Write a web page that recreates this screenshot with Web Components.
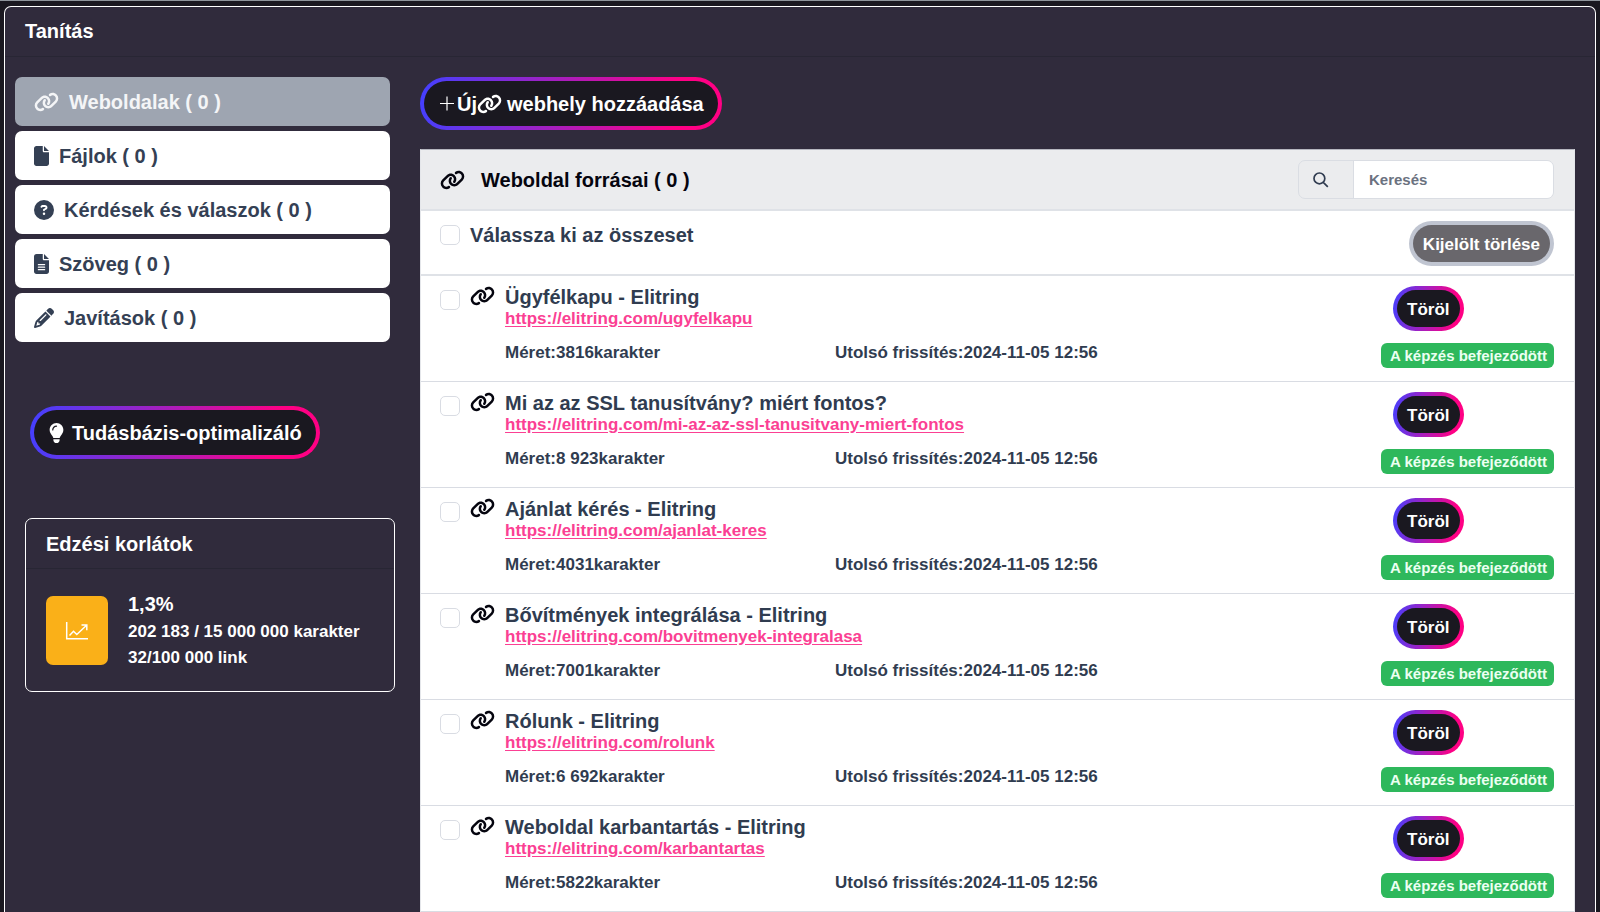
<!DOCTYPE html>
<html lang="hu">
<head>
<meta charset="utf-8">
<title>Tanítás</title>
<style>
html { background: #1a1820; }
body { margin: 0; font: bold 20px/24px "Liberation Sans", Arial, sans-serif; color: #303c50; height: 100vh; overflow: hidden; }
</style>
</head>
<body>
<training-page></training-page>

<script>
const ICONS = {
  link: ['0 0 640 512', 25, '<path d="M579.8 267.7c56.5-56.5 56.5-148 0-204.5c-50-50-128.8-56.5-186.3-15.4l-1.6 1.1c-14.4 10.3-17.7 30.3-7.4 44.6s30.3 17.7 44.6 7.4l1.6-1.1c32.1-22.9 76-19.3 103.8 8.6c31.5 31.5 31.5 82.5 0 114L422.3 334.8c-31.5 31.5-82.5 31.5-114 0c-27.9-27.9-31.5-71.8-8.6-103.8l1.1-1.6c10.3-14.4 6.9-34.4-7.4-44.6s-34.4-6.9-44.6 7.4l-1.1 1.6C206.5 251.2 213 330 263 380c56.5 56.5 148 56.5 204.5 0L579.8 267.7zM60.2 244.3c-56.5 56.5-56.5 148 0 204.5c50 50 128.8 56.5 186.3 15.4l1.6-1.1c14.4-10.3 17.7-30.3 7.4-44.6s-30.3-17.7-44.6-7.4l-1.6 1.1c-32.1 22.9-76 19.3-103.8-8.6C74 372 74 321 105.5 289.5L217.7 177.2c31.5-31.5 82.5-31.5 114 0c27.9 27.9 31.5 71.8 8.6 103.9l-1.1 1.6c-10.3 14.4-6.9 34.4 7.4 44.6s34.4 6.9 44.6-7.4l1.1-1.6C433.5 260.8 427 182 377 132c-56.5-56.5-148-56.5-204.5 0L60.2 244.3z"/>'],
  file: ['0 0 384 512', 15, '<path d="M0 64C0 28.7 28.7 0 64 0H224V128c0 17.7 14.3 32 32 32H384V448c0 35.3-28.7 64-64 64H64c-35.3 0-64-28.7-64-64V64zm384 64H256V0L384 128z"/>'],
  text: ['0 0 384 512', 15, '<path d="M64 0C28.7 0 0 28.7 0 64V448c0 35.3 28.7 64 64 64H320c35.3 0 64-28.7 64-64V160H256c-17.7 0-32-14.3-32-32V0H64zM256 0V128H384L256 0zM112 256H272c8.8 0 16 7.2 16 16s-7.2 16-16 16H112c-8.8 0-16-7.2-16-16s7.2-16 16-16zm0 64H272c8.8 0 16 7.2 16 16s-7.2 16-16 16H112c-8.8 0-16-7.2-16-16s7.2-16 16-16zm0 64H272c8.8 0 16 7.2 16 16s-7.2 16-16 16H112c-8.8 0-16-7.2-16-16s7.2-16 16-16z"/>'],
  question: ['0 0 512 512', 20, '<path d="M256 512A256 256 0 1 0 256 0a256 256 0 1 0 0 512zM169.8 165.3c7.9-22.3 29.1-37.3 52.8-37.3h58.3c34.9 0 63.1 28.3 63.1 63.1c0 22.6-12.1 43.5-31.7 54.8L280 264.4c-.2 13-10.9 23.6-24 23.6c-13.3 0-24-10.7-24-24V250.5c0-8.6 4.6-16.5 12.1-20.8l44.3-25.4c4.7-2.7 7.6-7.7 7.6-13.1c0-8.4-6.8-15.1-15.1-15.1H222.6c-3.4 0-6.4 2.1-7.5 5.3l-.4 1.2c-4.4 12.5-18.2 19-30.6 14.6s-19-18.2-14.6-30.6l.4-1.2zM224 352a32 32 0 1 1 64 0 32 32 0 1 1 -64 0z"/>'],
  pencil: ['0 0 512 512', 20, '<path d="M410.3 231l11.3-11.3-33.9-33.9-62.1-62.1L291.7 89.8l-11.3 11.3-22.6 22.6L58.6 322.9c-10.4 10.4-18 23.3-22.2 37.4L1 480.7c-2.5 8.4-.2 17.5 6.1 23.7s15.3 8.5 23.7 6.1l120.3-35.4c14.1-4.2 27-11.8 37.4-22.2L387.7 253.7 410.3 231zM160 399.4l-9.1 22.7c-4 3.1-8.5 5.4-13.3 6.9L59.4 452l23-78.1c1.4-4.9 3.8-9.4 6.9-13.3l22.7-9.1v32c0 8.8 7.2 16 16 16h32zM362.7 18.7L348.3 33.2 325.7 55.8 314.3 67.1l33.9 33.9 62.1 62.1 33.9 33.9 11.3-11.3 22.6-22.6 14.5-14.5c25-25 25-65.5 0-90.5L453.3 18.7c-25-25-65.5-25-90.5 0zm-47.4 168l-144 144c-6.2 6.2-16.4 6.2-22.6 0s-6.2-16.4 0-22.6l144-144c6.2-6.2 16.4-6.2 22.6 0s6.2 16.4 0 22.6z"/>'],
  bulb: ['0 0 384 512', 15, '<path d="M272 384c9.6-31.9 29.5-59.1 49.2-86.2l0 0c5.2-7.1 10.4-14.2 15.4-21.4c19.8-28.5 31.4-63 31.4-100.3C368 78.8 289.2 0 192 0S16 78.8 16 176c0 37.3 11.6 71.9 31.4 100.3c5 7.2 10.2 14.3 15.4 21.4l0 0c19.8 27.1 39.7 54.4 49.2 86.2H272zM192 512c44.2 0 80-35.8 80-80V416H112v16c0 44.2 35.8 80 80 80zM112 176c0 8.8-7.2 16-16 16s-16-7.2-16-16c0-61.9 50.1-112 112-112c8.8 0 16 7.2 16 16s-7.2 16-16 16c-44.2 0-80 35.8-80 80z"/>'],
  plus: ['0 0 14 20', 14, '<path d="M7 2.5v14M0 9.5h14" fill="none" stroke="currentColor" stroke-width="1.2"/>'],
  search: ['0 0 20 20', 20, '<path d="M8.4 3a5.4 5.4 0 1 0 0 10.8a5.4 5.4 0 1 0 0-10.8zM12.3 12.3l4.5 4.5" fill="none" stroke="currentColor" stroke-width="1.7"/>'],
  chart: ['0 0 24 20', 24, '<path d="M1.7 1v16.8H23M4.5 14.5l4-4.2 3.3 3.2 9.5-9M16.5 4h5.3v5.3" fill="none" stroke="currentColor" stroke-width="1.5"/>']
};

function define(name, render) {
  customElements.define(name, class extends HTMLElement {
    connectedCallback() {
      if (this.shadowRoot) return;
      const t = document.createElement('template');
      t.innerHTML = render(this);
      this.attachShadow({ mode: 'open' }).append(t.content.cloneNode(true));
    }
  });
}

define('ui-icon', el => {
  const [box, width, body] = ICONS[el.getAttribute('name')];
  return `<style>
    :host { display: inline-block; flex: none; height: 20px; }
    svg { display: block; height: 20px; fill: currentColor; }
  </style><svg viewBox="${box}" width="${width}" aria-hidden="true">${body}</svg>`;
});

define('nav-item', el => `<style>
    :host { display: block; }
    button { display: flex; align-items: center; gap: 10px; width: 100%; height: 49px; padding: 0 19px;
      border: 0; border-radius: 7px; background: #fff; color: #344054; font: inherit; text-align: left; }
    :host([active]) button { background: #9ea5b1; color: #f4f5f7; }
  </style>
  <button type="button"><ui-icon name="${el.getAttribute('icon')}"></ui-icon><span><slot></slot></span></button>`);

define('pill-button', el => `<style>
    :host { display: inline-block; vertical-align: top; }
    button { display: flex; align-items: center; height: 53px; padding: 0 14px 0 15px; border: 4px solid transparent; border-radius: 27px;
      background: linear-gradient(#1a1820, #1a1820) padding-box, linear-gradient(98deg, #4340ff, #ff0084 85%) border-box;
      color: #fff; font: inherit; white-space: nowrap; }
    :host([size=small]) button { height: 45px; padding: 2px 10px 0; border-radius: 23px; font-size: 17px; }
    :host([disabled]) button { background: linear-gradient(#69676c, #69676c) padding-box, linear-gradient(#c0c5d1, #c0c5d1) border-box; }
  </style>
  <button type="button" ${el.hasAttribute('disabled') ? 'disabled' : ''}><slot></slot></button>`);

define('limits-card', () => `<style>
    :host { display: block; border: 1px solid #fff; border-radius: 7px; color: #fff; }
    h2 { margin: 0; padding: 13px 20px 12px; border-bottom: 1px solid #282634; font: inherit; }
    .body { display: flex; align-items: center; gap: 20px; padding: 21px 20px 20px; }
    .tile { display: flex; align-items: center; justify-content: center; width: 62px; height: 69px; border-radius: 7px; background: #fab018; }
    p { margin: 0; line-height: 29px; }
    .small { font-size: 17px; line-height: 26px; }
  </style>
  <h2>Edzési korlátok</h2>
  <div class="body">
    <div class="tile"><ui-icon name="chart"></ui-icon></div>
    <div><p>1,3%</p><p class="small">202 183 / 15 000 000 karakter</p><p class="small">32/100 000 link</p></div>
  </div>`);

define('search-box', () => `<style>
    :host { display: flex; width: 256px; height: 39px; box-sizing: border-box; border: 1px solid #dadde3; border-radius: 7px; overflow: hidden; }
    label { display: flex; align-items: center; width: 55px; padding-left: 12px; box-sizing: border-box; border-right: 1px solid #dadde3; color: #303c50; }
    input { flex: 1; min-width: 0; border: 0; padding: 0 15px; background: #fff; color: #303c50; font: inherit; font-size: 15px; }
    input::placeholder { color: #6b7280; opacity: 1; }
  </style>
  <label for="q" aria-label="Keresés"><ui-icon name="search"></ui-icon></label>
  <input id="q" type="text" placeholder="Keresés">`);

define('check-box', el => `<style>
    :host { display: block; flex: none; height: 20px; }
    input { appearance: none; display: block; box-sizing: border-box; width: 20px; height: 20px; margin: 0; border: 1px solid #d9dce3; border-radius: 5px; background: #fff; }
    input:checked { background: #4340ff; }
  </style>
  <input type="checkbox" aria-label="${el.getAttribute('label')}">`);

define('source-row', el => {
  const a = n => el.getAttribute(n);
  return `<style>
    :host { display: flex; box-sizing: border-box; height: 106px; padding: 10px 20px 0 19px; border-bottom: 1px solid #d9dce3; background: #fff; }
    check-box { margin: 4px 10px 0 0; }
    ui-icon { color: #05050f; margin-right: 10px; }
    .info { flex: 1; min-width: 0; }
    h3 { margin: 0; font: inherit; line-height: 22px; }
    a { display: block; width: fit-content; color: #fb4093; font-size: 17px; line-height: 22px; text-underline-offset: 2px; }
    dl { display: grid; grid-template-columns: 330px 1fr; margin: 12px 0 0; font-size: 17px; line-height: 22px; }
    dl div { display: flex; }
    dd { margin: 0; }
    .side { width: 173px; }
    pill-button { margin-left: 12px; }
    .badge { display: block; margin-top: 12px; padding: 0 9px; height: 25px; border-radius: 6px; background: #2eb85c; color: #ebfff1; font-size: 15px; line-height: 25px; white-space: nowrap; }
  </style>
  <check-box label="${a('name')}"></check-box>
  <ui-icon name="link"></ui-icon>
  <div class="info">
    <h3>${a('name')}</h3>
    <a href="https://elitring.com/${a('path')}">https://elitring.com/${a('path')}</a>
    <dl><div><dt>Méret:</dt><dd>${a('chars')}karakter</dd></div><div><dt>Utolsó frissítés:</dt><dd>2024-11-05 12:56</dd></div></dl>
  </div>
  <div class="side"><pill-button size="small">Töröl</pill-button><span class="badge">A képzés befejeződött</span></div>`;
});

define('source-list', () => `<style>
    :host { display: block; padding-bottom: 20px; border: 1px solid #e4e6ea; border-top-color: #b5b6bf; background: #fff; }
    header { display: flex; align-items: center; justify-content: space-between; height: 59px; padding: 0 20px 0 19px; background: #ebecee; border-bottom: 2px solid #dfe2e7; color: #05050f; }
    h2 { display: flex; align-items: center; gap: 16px; margin: 0; font: inherit; }
    .all { display: flex; justify-content: space-between; box-sizing: border-box; height: 65px; padding: 10px 20px 0 19px; border-bottom: 2px solid #dfe2e7; }
    .pick { display: flex; gap: 10px; height: 24px; padding-top: 2px; align-items: center; }
  </style>
  <header><h2><ui-icon name="link"></ui-icon>Weboldal forrásai ( 0 )</h2><search-box></search-box></header>
  <div class="all"><div class="pick"><check-box label="Válassza ki az összeset"></check-box><span>Válassza ki az összeset</span></div><pill-button size="small" disabled>Kijelölt törlése</pill-button></div>
  <source-row name="Ügyfélkapu - Elitring" path="ugyfelkapu" chars="3816"></source-row>
  <source-row name="Mi az az SSL tanusítvány? miért fontos?" path="mi-az-az-ssl-tanusitvany-miert-fontos" chars="8 923"></source-row>
  <source-row name="Ajánlat kérés - Elitring" path="ajanlat-keres" chars="4031"></source-row>
  <source-row name="Bővítmények integrálása - Elitring" path="bovitmenyek-integralasa" chars="7001"></source-row>
  <source-row name="Rólunk - Elitring" path="rolunk" chars="6 692"></source-row>
  <source-row name="Weboldal karbantartás - Elitring" path="karbantartas" chars="5822"></source-row>`);

define('training-page', () => `<style>
    :host { display: flex; flex-direction: column; height: 100%; box-sizing: border-box; border-top: 1px solid #8f959c; padding: 5px 4px 0; }
    .card { flex: 1; border: 1px solid #fff; border-bottom: 0; border-radius: 7px 7px 0 0; background: #302b3c; overflow: hidden; }
    h1 { margin: 0; padding: 12px 20px 13px; border-bottom: 1px solid #282634; color: #fff; font: inherit; }
    .cols { display: grid; grid-template-columns: 375px 1fr; gap: 30px; padding: 20px 20px 0 10px; }
    nav { display: flex; flex-direction: column; gap: 5px; }
    .tool { padding: 64px 15px 59px; }
    .tool pill-button ui-icon { margin-right: 8px; }
    limits-card { margin: 0 -5px 0 10px; }
    source-list { margin-top: 19px; }
    .web { margin-left: 5px; }
    .plus { margin: 0 3px 0 1px; }
  </style>
  <div class="card">
    <h1>Tanítás</h1>
    <div class="cols">
      <aside>
        <nav>
          <nav-item icon="link" active>Weboldalak ( 0 )</nav-item>
          <nav-item icon="file">Fájlok ( 0 )</nav-item>
          <nav-item icon="question">Kérdések és válaszok ( 0 )</nav-item>
          <nav-item icon="text">Szöveg ( 0 )</nav-item>
          <nav-item icon="pencil">Javítások ( 0 )</nav-item>
        </nav>
        <div class="tool"><pill-button><ui-icon name="bulb"></ui-icon>Tudásbázis-optimalizáló</pill-button></div>
        <limits-card></limits-card>
      </aside>
      <main>
        <pill-button><ui-icon class="plus" name="plus"></ui-icon>Új<ui-icon name="link"></ui-icon><span class="web">webhely hozzáadása</span></pill-button>
        <source-list></source-list>
      </main>
    </div>
  </div>`);
</script>
</body>
</html>
